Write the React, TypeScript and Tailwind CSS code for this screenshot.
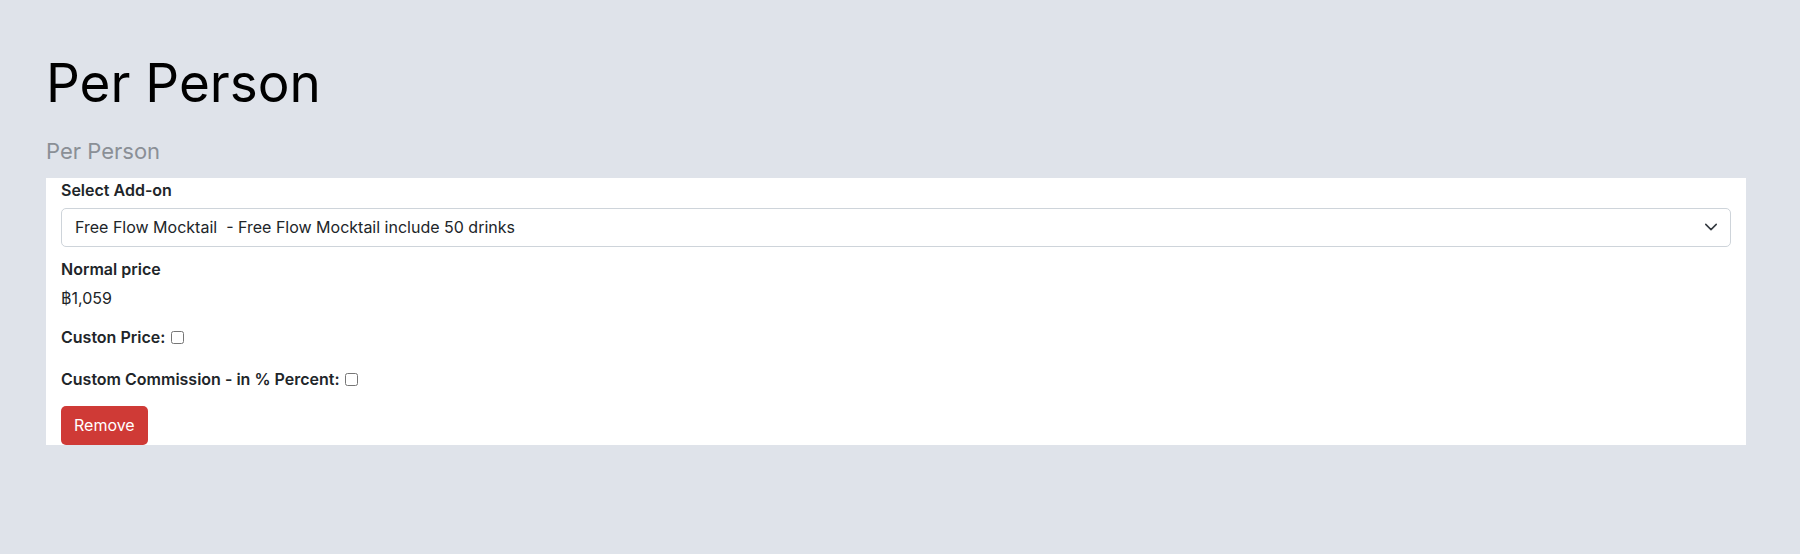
import { useState } from 'react';

const ADDONS = [
  'Free Flow Mocktail\u00a0\u00a0- Free Flow Mocktail include 50 drinks',
];

function Checkbox({ checked, onChange }: { checked: boolean; onChange: (v: boolean) => void }) {
  return (
    <input
      type="checkbox"
      checked={checked}
      onChange={(e) => onChange(e.target.checked)}
      className="ml-[6px] h-[13px] w-[13px] align-[-1px]"
    />
  );
}

export default function App() {
  const [addon, setAddon] = useState(ADDONS[0]);
  const [customPrice, setCustomPrice] = useState(false);
  const [customCommission, setCustomCommission] = useState(false);

  return (
    <div
      className="min-h-screen bg-[#dfe3ea] px-[46px] pt-[52px] text-[#212529]"
      style={{ fontFamily: 'Inter, "Noto Sans", sans-serif' }}
    >
      <h1 className="text-[53px] font-normal leading-[1.2] text-black">Per Person</h1>
      <p className="mt-[22px] text-[22px] leading-[1.2] text-[#8a8f96]">Per Person</p>

      {/* Add-on card */}
      <div className="mt-[14px] w-[1700px] bg-white px-[15px] text-[16px] leading-[1.5]">
        <label className="block font-semibold">Select Add-on</label>
        <div className="relative mt-[6px]">
          <select
            value={addon}
            onChange={(e) => setAddon(e.target.value)}
            className="h-[39px] w-full appearance-none rounded-[5px] border border-[#ced4da] bg-white pl-[13px] pr-10 text-[16px] text-[#212529] focus:outline-none"
          >
            {ADDONS.map((a) => (
              <option key={a} value={a}>
                {a}
              </option>
            ))}
          </select>
          <svg
            className="pointer-events-none absolute right-[13px] top-[12px] h-[14px] w-[14px] text-[#343a40]"
            viewBox="0 0 16 16"
            fill="none"
            stroke="currentColor"
            strokeWidth={1.75}
            strokeLinecap="round"
            strokeLinejoin="round"
          >
            <path d="m2 5 6 6 6-6" />
          </svg>
        </div>

        <div className="mt-[10px] font-semibold">Normal price</div>
        <div className="mt-[5px]">฿1,059</div>

        <div className="mt-[15px] font-semibold">
          Custon Price:
          <Checkbox checked={customPrice} onChange={setCustomPrice} />
        </div>

        <div className="mt-[18px] font-semibold">
          Custom Commission - in % Percent:
          <Checkbox checked={customCommission} onChange={setCustomCommission} />
        </div>

        <button
          type="button"
          className="mt-[15px] h-[39px] rounded-[5px] bg-[#cf3a36] px-[13px] text-[16px] text-white"
        >
          Remove
        </button>
      </div>
    </div>
  );
}
